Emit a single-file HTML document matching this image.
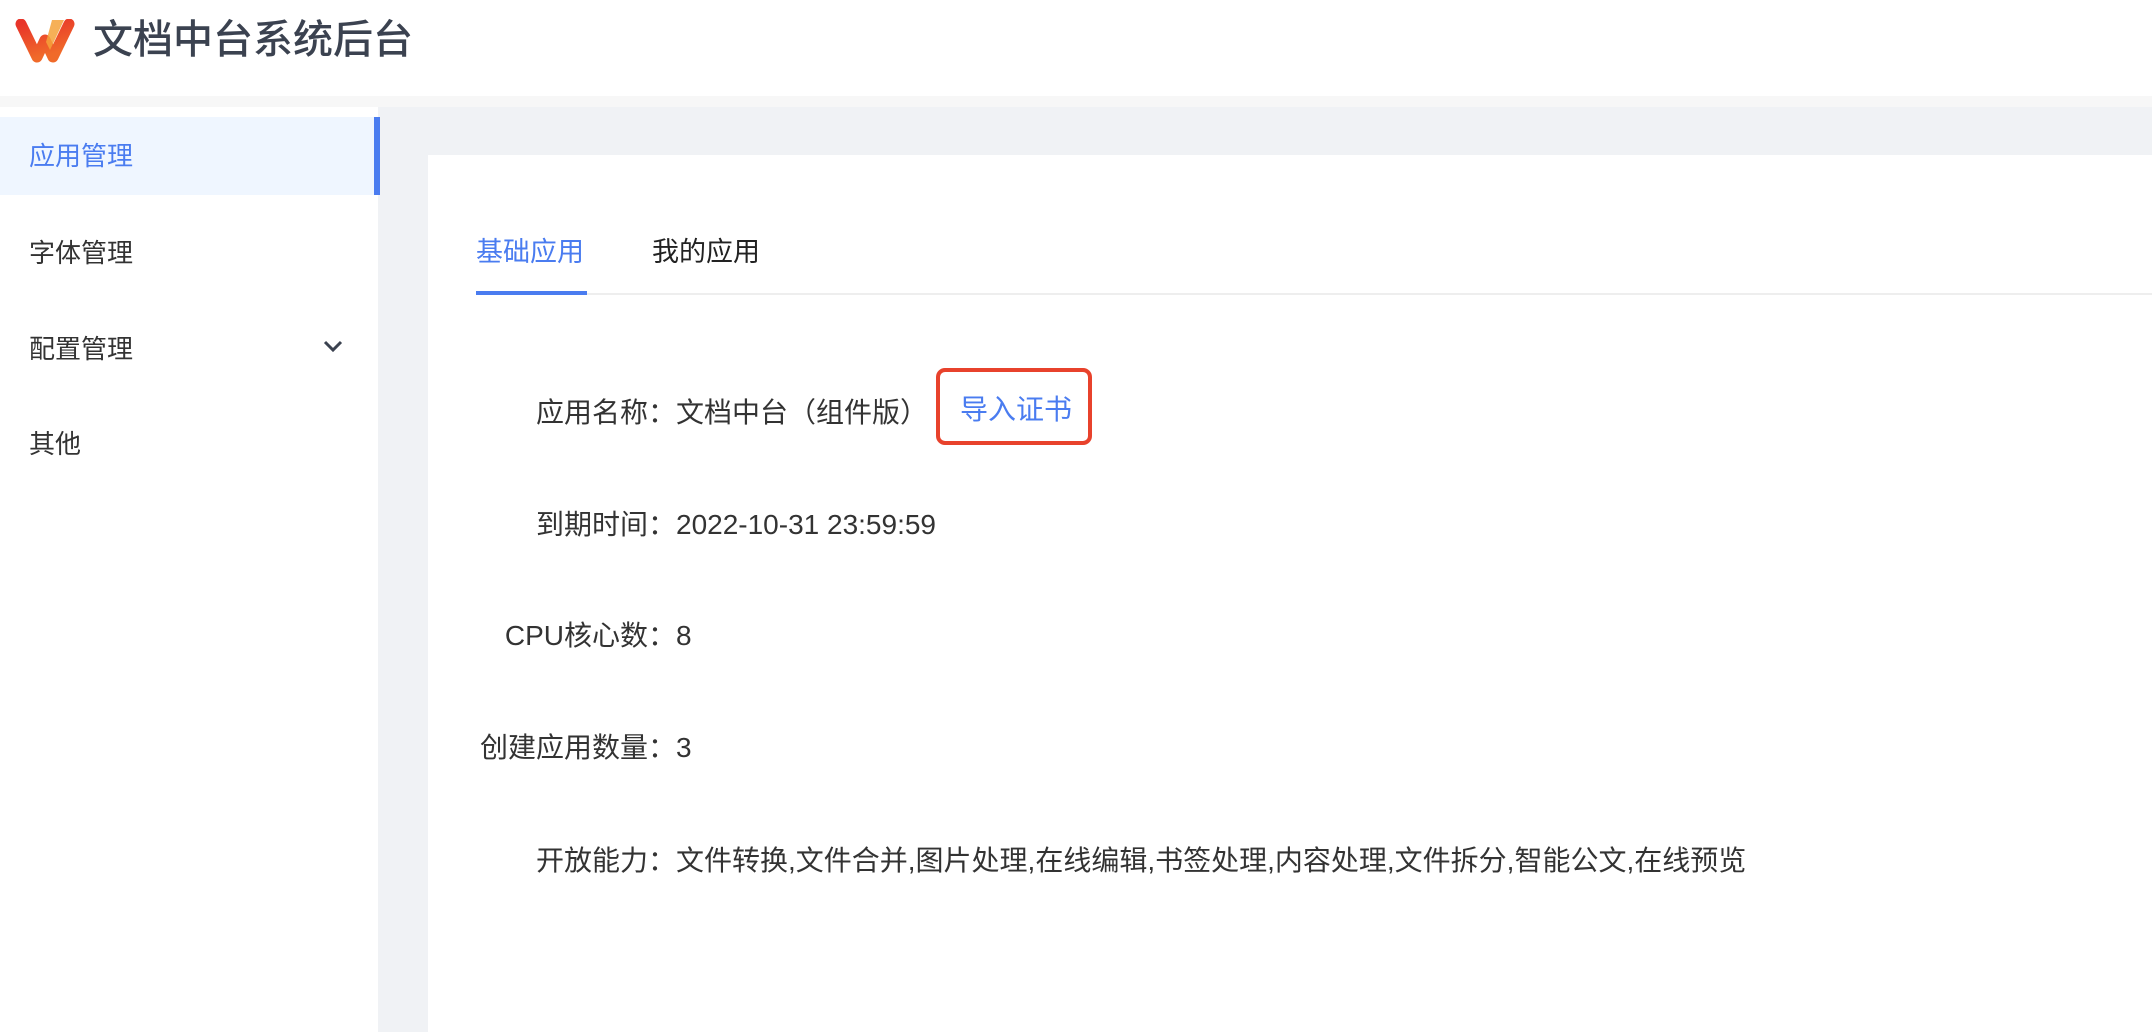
<!DOCTYPE html>
<html><head><meta charset="utf-8">
<style>
*{margin:0;padding:0;box-sizing:border-box}
html,body{width:2152px;height:1032px;overflow:hidden;background:#fff;font-family:"Liberation Sans","Noto Sans CJK SC",sans-serif;}
.header{position:absolute;left:0;top:0;width:2152px;height:96px;background:#fff}
.title{position:absolute;left:93px;top:17px;font-size:40px;line-height:46px;color:#3b4250;font-weight:500}
.strip{position:absolute;left:0;top:96px;width:2152px;height:11px;background:#f7f7f7}
.side{position:absolute;left:0;top:107px;width:378px;height:925px;background:#fff}
.main{position:absolute;left:378px;top:107px;width:1774px;height:925px;background:#f0f2f5}
.card{position:absolute;left:428px;top:155px;width:1724px;height:877px;background:#fff}
.item{position:absolute;left:29px;font-size:26px;color:#333;line-height:30px}
.active{position:absolute;left:0;top:117px;width:380px;height:78px;background:#eff6ff;border-right:6px solid #4a7cf0}
.tab{position:absolute;top:235px;font-size:27px;line-height:34px}
.tabline{position:absolute;left:476px;top:293px;width:1676px;height:2px;background:#eeeeee}
.tabul{position:absolute;left:476px;top:291px;width:111px;height:4px;background:#4a7cf0}
.row{position:absolute;left:0;width:2152px;font-size:28px;line-height:32px;color:#333}
.row .l{position:absolute;right:1476px;text-align:right;white-space:nowrap}
.row .v{position:absolute;left:676px;white-space:nowrap}
.btn{position:absolute;left:936px;top:368px;width:156px;height:77px;border:4px solid #e8422c;border-radius:9px}
.btn span{position:absolute;left:20px;top:23px;font-size:28px;line-height:30px;color:#4a7cf0;white-space:nowrap}
</style></head><body>
<div class="header">
<svg style="position:absolute;left:14px;top:19px" width="62" height="45" viewBox="0 0 62 45">
<defs><linearGradient id="g" x1="0" y1="0" x2="0.4" y2="1"><stop offset="0" stop-color="#e8342a"/><stop offset="1" stop-color="#f06a2a"/></linearGradient></defs>
<polyline points="7,5 23,38 31,21 39,38 55,5" fill="none" stroke="url(#g)" stroke-width="11" stroke-linejoin="round" stroke-linecap="round"/>
<path d="M38 1 L50 1 L36 31 L32 23 Z" fill="#f5a23a" opacity="0.85"/>
</svg>
<div class="title">文档中台系统后台</div>
</div>
<div class="strip"></div>
<div class="side"></div>
<div class="main"></div>
<div class="card"></div>
<div class="active"></div>
<div class="item" style="top:141px;color:#4a7cf0">应用管理</div>
<div class="item" style="top:238px">字体管理</div>
<div class="item" style="top:334px">配置管理</div>
<svg style="position:absolute;left:323px;top:339px" width="20" height="14" viewBox="0 0 20 14"><path d="M2 3 L10 11 L18 3" fill="none" stroke="#3b4250" stroke-width="3"/></svg>
<div class="item" style="top:429px">其他</div>
<div class="tabline"></div>
<div class="tabul"></div>
<div class="tab" style="left:476px;color:#4a7cf0">基础应用</div>
<div class="tab" style="left:652px;color:#222">我的应用</div>
<div class="row" style="top:397px"><span class="l">应用名称：</span><span class="v">文档中台（组件版）</span></div>
<div class="btn"><span>导入证书</span></div>
<div class="row" style="top:509px"><span class="l">到期时间：</span><span class="v">2022-10-31 23:59:59</span></div>
<div class="row" style="top:620px"><span class="l">CPU核心数：</span><span class="v">8</span></div>
<div class="row" style="top:732px"><span class="l">创建应用数量：</span><span class="v">3</span></div>
<div class="row" style="top:845px"><span class="l">开放能力：</span><span class="v">文件转换,文件合并,图片处理,在线编辑,书签处理,内容处理,文件拆分,智能公文,在线预览</span></div>
</body></html>
